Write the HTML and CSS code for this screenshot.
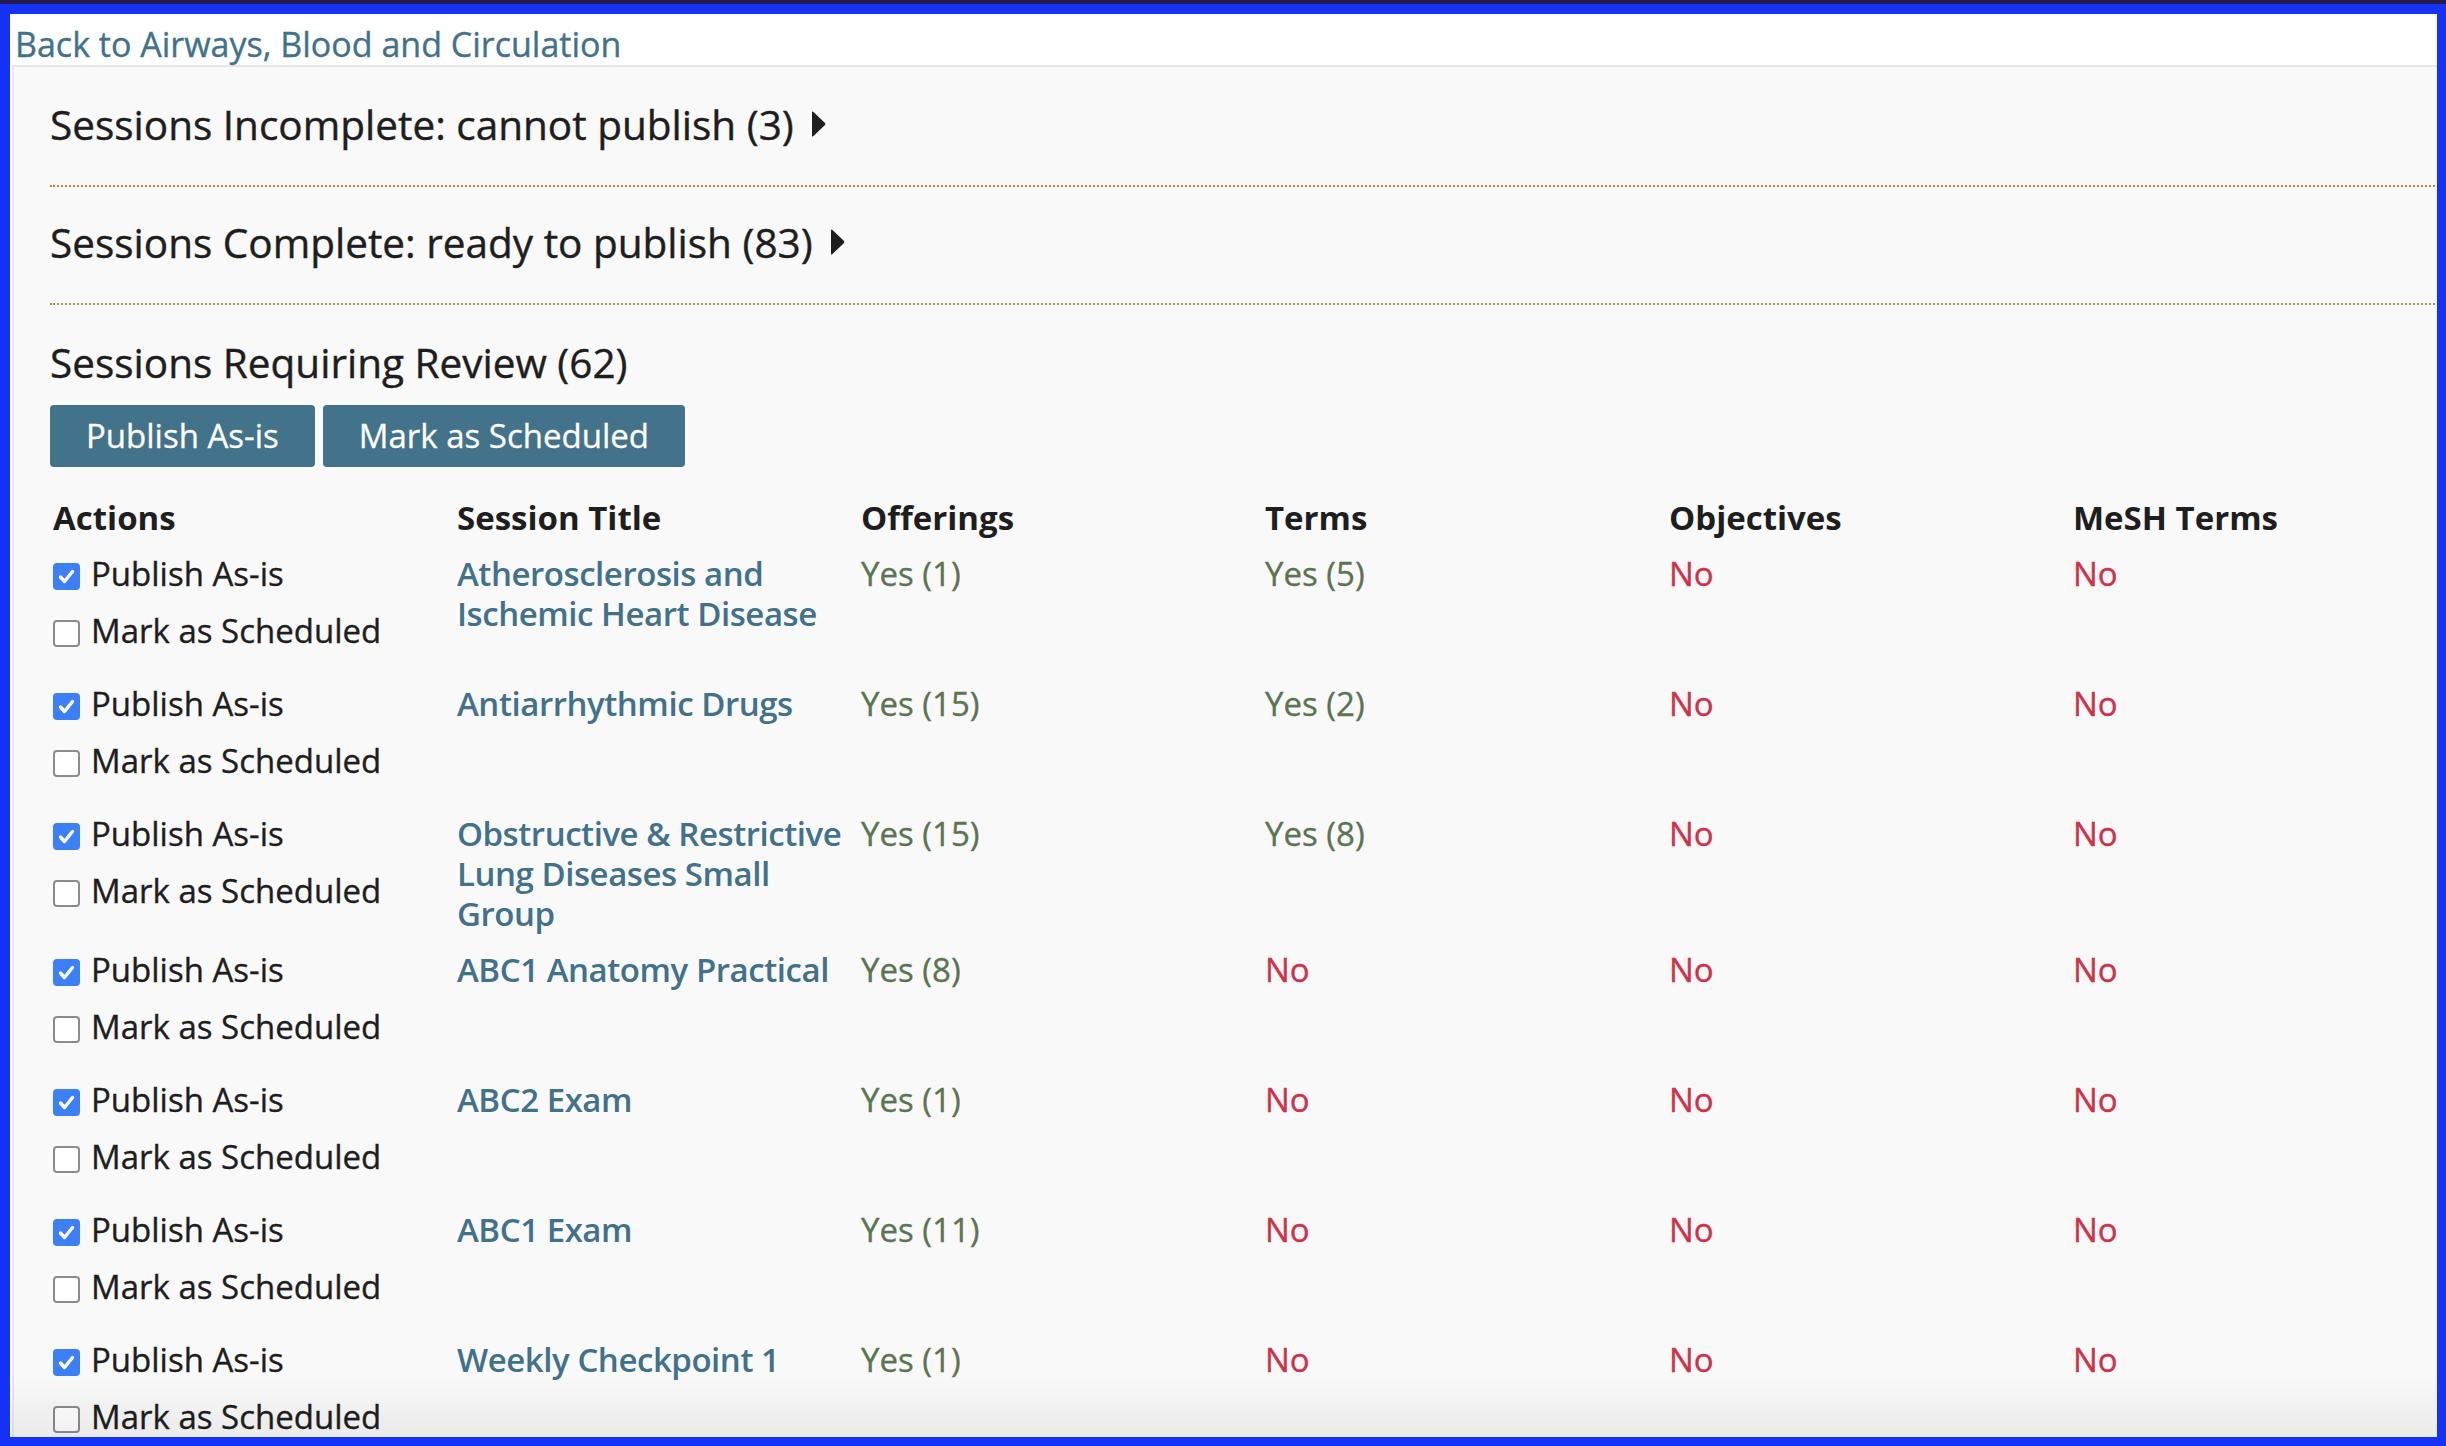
FILE: index.html
```html
<!DOCTYPE html>
<html lang="en">
<head>
<meta charset="utf-8">
<title>Publish Sessions</title>
<link rel="stylesheet" href="styles.css">
</head>
<body>
<div class="page">
  <a class="back" href="#">Back to Airways, Blood and Circulation</a>
  <div class="box">
    <section class="group collapsed">
      <h2 class="group-title">Sessions Incomplete: cannot publish (3)<svg class="caret" viewBox="0 0 14 26" width="14" height="26"><path d="M1.2 0.8 L13 12 Q13.8 13 13 14 L1.2 25.2 Q0 26 0 24.5 L0 1.5 Q0 0 1.2 0.8 Z" fill="#1e1e1e"/></svg></h2>
    </section>
    <section class="group collapsed">
      <h2 class="group-title">Sessions Complete: ready to publish (83)<svg class="caret" viewBox="0 0 14 26" width="14" height="26"><path d="M1.2 0.8 L13 12 Q13.8 13 13 14 L1.2 25.2 Q0 26 0 24.5 L0 1.5 Q0 0 1.2 0.8 Z" fill="#1e1e1e"/></svg></h2>
    </section>
    <section class="group open">
      <h2 class="group-title">Sessions Requiring Review (62)</h2>
      <div class="bulk">
        <button class="btn" type="button">Publish As-is</button>
        <button class="btn" type="button">Mark as Scheduled</button>
      </div>
      <table class="review">
        <thead>
          <tr><th>Actions</th><th>Session Title</th><th>Offerings</th><th>Terms</th><th>Objectives</th><th>MeSH Terms</th></tr>
        </thead>
        <tbody>
          <tr>
            <td><div class="act"><span class="cb on"><svg viewBox="0 0 27 27" width="27" height="27"><path d="M7.5 14 L11.5 18.5 L19.5 8.5" fill="none" stroke="#fff" stroke-width="3.4" stroke-linecap="round" stroke-linejoin="round"/></svg></span>Publish As-is</div><div class="act"><span class="cb off"></span>Mark as Scheduled</div></td>
            <td class="t"><a class="title" href="#">Atherosclerosis and<br>Ischemic Heart Disease</a></td>
            <td class="yes">Yes (1)</td><td class="yes">Yes (5)</td><td class="no">No</td><td class="no">No</td>
          </tr>
          <tr>
            <td><div class="act"><span class="cb on"><svg viewBox="0 0 27 27" width="27" height="27"><path d="M7.5 14 L11.5 18.5 L19.5 8.5" fill="none" stroke="#fff" stroke-width="3.4" stroke-linecap="round" stroke-linejoin="round"/></svg></span>Publish As-is</div><div class="act"><span class="cb off"></span>Mark as Scheduled</div></td>
            <td class="t"><a class="title" href="#">Antiarrhythmic Drugs</a></td>
            <td class="yes">Yes (15)</td><td class="yes">Yes (2)</td><td class="no">No</td><td class="no">No</td>
          </tr>
          <tr>
            <td><div class="act"><span class="cb on"><svg viewBox="0 0 27 27" width="27" height="27"><path d="M7.5 14 L11.5 18.5 L19.5 8.5" fill="none" stroke="#fff" stroke-width="3.4" stroke-linecap="round" stroke-linejoin="round"/></svg></span>Publish As-is</div><div class="act"><span class="cb off"></span>Mark as Scheduled</div></td>
            <td class="t"><a class="title" href="#">Obstructive &amp; Restrictive<br>Lung Diseases Small<br>Group</a></td>
            <td class="yes">Yes (15)</td><td class="yes">Yes (8)</td><td class="no">No</td><td class="no">No</td>
          </tr>
          <tr>
            <td><div class="act"><span class="cb on"><svg viewBox="0 0 27 27" width="27" height="27"><path d="M7.5 14 L11.5 18.5 L19.5 8.5" fill="none" stroke="#fff" stroke-width="3.4" stroke-linecap="round" stroke-linejoin="round"/></svg></span>Publish As-is</div><div class="act"><span class="cb off"></span>Mark as Scheduled</div></td>
            <td class="t"><a class="title" href="#">ABC1 Anatomy Practical</a></td>
            <td class="yes">Yes (8)</td><td class="no">No</td><td class="no">No</td><td class="no">No</td>
          </tr>
          <tr>
            <td><div class="act"><span class="cb on"><svg viewBox="0 0 27 27" width="27" height="27"><path d="M7.5 14 L11.5 18.5 L19.5 8.5" fill="none" stroke="#fff" stroke-width="3.4" stroke-linecap="round" stroke-linejoin="round"/></svg></span>Publish As-is</div><div class="act"><span class="cb off"></span>Mark as Scheduled</div></td>
            <td class="t"><a class="title" href="#">ABC2 Exam</a></td>
            <td class="yes">Yes (1)</td><td class="no">No</td><td class="no">No</td><td class="no">No</td>
          </tr>
          <tr>
            <td><div class="act"><span class="cb on"><svg viewBox="0 0 27 27" width="27" height="27"><path d="M7.5 14 L11.5 18.5 L19.5 8.5" fill="none" stroke="#fff" stroke-width="3.4" stroke-linecap="round" stroke-linejoin="round"/></svg></span>Publish As-is</div><div class="act"><span class="cb off"></span>Mark as Scheduled</div></td>
            <td class="t"><a class="title" href="#">ABC1 Exam</a></td>
            <td class="yes">Yes (11)</td><td class="no">No</td><td class="no">No</td><td class="no">No</td>
          </tr>
          <tr>
            <td><div class="act"><span class="cb on"><svg viewBox="0 0 27 27" width="27" height="27"><path d="M7.5 14 L11.5 18.5 L19.5 8.5" fill="none" stroke="#fff" stroke-width="3.4" stroke-linecap="round" stroke-linejoin="round"/></svg></span>Publish As-is</div><div class="act"><span class="cb off"></span>Mark as Scheduled</div></td>
            <td class="t"><a class="title" href="#">Weekly Checkpoint 1</a></td>
            <td class="yes">Yes (1)</td><td class="no">No</td><td class="no">No</td><td class="no">No</td>
          </tr>
        </tbody>
      </table>
    </section>
  </div>
  <div class="fade"></div>
</div>
</body>
</html>
```
FILE: styles.css
```css
html, body {
  margin: 0;
  padding: 0;
}

body {
  height: 1446px;
  box-sizing: border-box;
  border-top: 4px solid #241d50;
  padding: 10px 9px 9px 10px;
  background: #1732f7;
  overflow: hidden;
  font-family: "Open Sans", "Noto Sans", sans-serif;
  font-size: 33px;
  font-weight: 400;
  line-height: 40px;
  color: #1e1e1e;
}

.page {
  position: relative;
  height: 100%;
  background: #ffffff;
  overflow: hidden;
}

.back {
  display: block;
  margin: 10px 0 0 5px;
  height: 40px;
  line-height: 40px;
  font-size: 34px;
  color: #42718a;
  text-decoration: none;
  white-space: nowrap;
  -webkit-text-stroke: 0.35px #42718a;
}

.box {
  margin: 1px 0 0 2px;
  width: 2520px;
  min-height: 1500px;
  background: #f9f9f9;
  border-top: 2px solid #e3e9e9;
  border-left: 2px solid #e3e9e9;
  padding: 2px 0 0 36px;
}

.group {
  padding: 30px 0 34px;
}

.group.collapsed {
  border-bottom: 2px dotted #c5843a;
}

.group.open {
  padding-top: 32px;
}

.group-title {
  margin: 0;
  font-size: 40.5px;
  line-height: 52px;
  font-weight: 400;
  color: #1e1e1e;
  white-space: nowrap;
  display: flex;
  align-items: flex-start;
  -webkit-text-stroke: 0.4px #1e1e1e;
}

.caret {
  margin: 12px 0 0 18px;
  flex: none;
}

.bulk {
  display: flex;
  gap: 8px;
  margin-top: 16px;
}

.btn {
  font: inherit;
  height: 62px;
  line-height: 62px;
  padding: 0 36px;
  border: 0;
  border-radius: 4px;
  background: #43738a;
  color: #ffffff;
  white-space: nowrap;
  -webkit-text-stroke: 0.3px #ffffff;
}

.review {
  margin-top: 23px;
  border-collapse: collapse;
  table-layout: fixed;
  width: 2424px;
}

.review th,
.review td {
  width: 398px;
  padding: 8px 3px;
  text-align: left;
  vertical-align: top;
  line-height: 40px;
  white-space: nowrap;
}

.review th {
  font-weight: 700;
  color: #1e1e1e;
}

.act {
  display: flex;
  align-items: flex-start;
  height: 40px;
  margin-bottom: 17px;
  color: #1e1e1e;
  -webkit-text-stroke: 0.35px #1e1e1e;
}

.cb {
  flex: none;
  box-sizing: border-box;
  width: 27px;
  height: 27px;
  margin: 9px 11px 0 0;
  border-radius: 4px;
  display: block;
  -webkit-text-stroke: 0;
}

.cb svg {
  display: block;
}

.cb.on {
  background: #3b80f6;
}

.cb.off {
  background: #ffffff;
  border: 2.5px solid #8b8b91;
}

.title {
  color: #42718a;
  font-weight: 600;
  letter-spacing: -0.45px;
  text-decoration: none;
}

.yes {
  color: #5b7452;
  -webkit-text-stroke: 0.35px #5b7452;
}

.no {
  color: #cf304a;
  -webkit-text-stroke: 0.35px #cf304a;
}

.fade {
  position: absolute;
  left: 0;
  right: 0;
  bottom: 0;
  height: 64px;
  background: linear-gradient(rgba(0, 0, 0, 0), rgba(0, 0, 0, 0.06));
  pointer-events: none;
}
```
